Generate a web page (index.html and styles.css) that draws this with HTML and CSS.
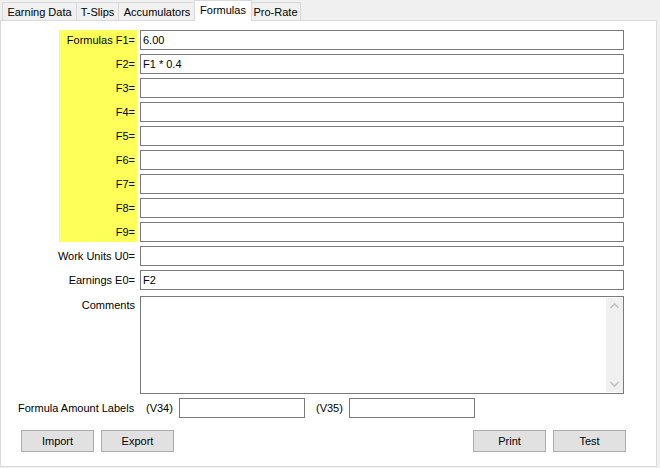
FILE: index.html
```html
<!DOCTYPE html>
<html>
<head>
<meta charset="utf-8">
<link rel="stylesheet" href="styles.css">
</head>
<body>
<div class="window">
  <div class="tabs">
    <div class="tab tab-earning">Earning Data</div>
    <div class="tab tab-tslips">T-Slips</div>
    <div class="tab tab-acc">Accumulators</div>
    <div class="tab tab-formulas active">Formulas</div>
    <div class="tab tab-prorate">Pro-Rate</div>
  </div>
  <div class="panel">
    <div class="fblock">
      <div class="fnames">
        <div class="lbl">Formulas F1=</div>
        <div class="lbl">F2=</div>
        <div class="lbl">F3=</div>
        <div class="lbl">F4=</div>
        <div class="lbl">F5=</div>
        <div class="lbl">F6=</div>
        <div class="lbl">F7=</div>
        <div class="lbl">F8=</div>
        <div class="lbl">F9=</div>
      </div>
      <div class="finputs">
        <div class="field">6.00</div>
        <div class="field">F1 * 0.4</div>
        <div class="field"></div>
        <div class="field"></div>
        <div class="field"></div>
        <div class="field"></div>
        <div class="field"></div>
        <div class="field"></div>
        <div class="field"></div>
      </div>
    </div>
    <div class="row">
      <div class="rlabel">Work Units U0=</div>
      <div class="field"></div>
    </div>
    <div class="row">
      <div class="rlabel">Earnings E0=</div>
      <div class="field">F2</div>
    </div>
    <div class="row row-comments">
      <div class="rlabel clabel">Comments</div>
      <div class="memo">
        <div class="memo-text"></div>
        <div class="vscroll">
          <svg class="arrow" width="17" height="17" viewBox="0 0 17 17"><polyline points="4.5,10 8.5,6 12.5,10" fill="none" stroke="#c2c2c2" stroke-width="1.6"/></svg>
          <svg class="arrow" width="17" height="17" viewBox="0 0 17 17"><polyline points="4.5,7 8.5,11 12.5,7" fill="none" stroke="#c2c2c2" stroke-width="1.6"/></svg>
        </div>
      </div>
    </div>
    <div class="amounts">
      <div class="amt-label">Formula Amount Labels</div>
      <div class="vtag">(V34)</div>
      <div class="field small"></div>
      <div class="vtag vtag2">(V35)</div>
      <div class="field small"></div>
    </div>
    <div class="buttons">
      <div class="bgroup">
        <div class="btn">Import</div>
        <div class="btn">Export</div>
      </div>
      <div class="bgroup">
        <div class="btn">Print</div>
        <div class="btn">Test</div>
      </div>
    </div>
  </div>
</div>
</body>
</html>
```
FILE: styles.css
```css
* { box-sizing: border-box; }
html, body {
  margin: 0;
  padding: 0;
  background: #f0f0f0;
  font-family: "Liberation Sans", Arial, sans-serif;
  font-size: 11px;
  color: #000;
}
.window {
  width: 660px;
  height: 468px;
}
.tabs {
  display: flex;
  align-items: flex-end;
  height: 21px;
  padding-left: 2px;
  margin-bottom: -1px;
}
.tab {
  height: 19px;
  line-height: 18px;
  border: 1px solid #d9d9d9;
  border-bottom: none;
  background: #f0f0f0;
  text-align: center;
  margin-left: -1px;
}
.tab:first-child { margin-left: 0; }
.tab-earning { width: 75px; }
.tab-tslips { width: 43px; }
.tab-acc { width: 78px; }
.tab-formulas { width: 57px; }
.tab-prorate { width: 51px; }
.tab.active {
  height: 21px;
  line-height: 19px;
  background: #fff;
  position: relative;
  z-index: 2;
  margin-left: -2px;
  margin-right: -2px;
  width: 58px;
}
.tab.active + .tab { margin-left: 0; }
.panel {
  width: 657px;
  height: 447px;
  background: #fff;
  border: 1px solid #d9d9d9;
  padding-top: 9px;
  position: relative;
  z-index: 1;
}
.field {
  width: 484px;
  height: 20px;
  border: 1px solid #7a7a7a;
  background: #fff;
  line-height: 18px;
  padding-left: 2px;
  white-space: pre;
}
.fblock {
  display: flex;
}
.fnames {
  margin-left: 58px;
  width: 78px;
  background: #ffff5a;
  display: flex;
  flex-direction: column;
  gap: 4px;
}
.lbl {
  height: 20px;
  line-height: 20px;
  text-align: right;
  padding-right: 2px;
}
.finputs {
  margin-left: 3px;
  display: flex;
  flex-direction: column;
  gap: 4px;
}
.row {
  display: flex;
  margin-top: 4px;
}
.rlabel {
  width: 136px;
  margin-right: 3px;
  text-align: right;
  padding-right: 2px;
  line-height: 20px;
}
.row-comments { margin-top: 6px; }
.clabel { line-height: 18px; }
.memo {
  width: 484px;
  height: 98px;
  border: 1px solid #7a7a7a;
  display: flex;
  padding: 1px 0;
}
.memo-text { flex: 1; }
.vscroll {
  width: 17px;
  background: #f0f0f0;
  display: flex;
  flex-direction: column;
  justify-content: space-between;
}
.arrow { display: block; }
.amounts {
  display: flex;
  align-items: center;
  margin-top: 4px;
  padding-left: 17px;
}
.amt-label { width: 128px; }
.vtag { width: 33px; }
.vtag2 { margin-left: 11px; width: 33px; }
.field.small { width: 126px; }
.buttons {
  display: flex;
  justify-content: space-between;
  margin-top: 12px;
  padding-left: 20px;
  padding-right: 30px;
}
.bgroup {
  display: flex;
  gap: 7px;
}
.btn {
  width: 73px;
  height: 22px;
  line-height: 20px;
  border: 1px solid #adadad;
  background: #e1e1e1;
  text-align: center;
}
```
